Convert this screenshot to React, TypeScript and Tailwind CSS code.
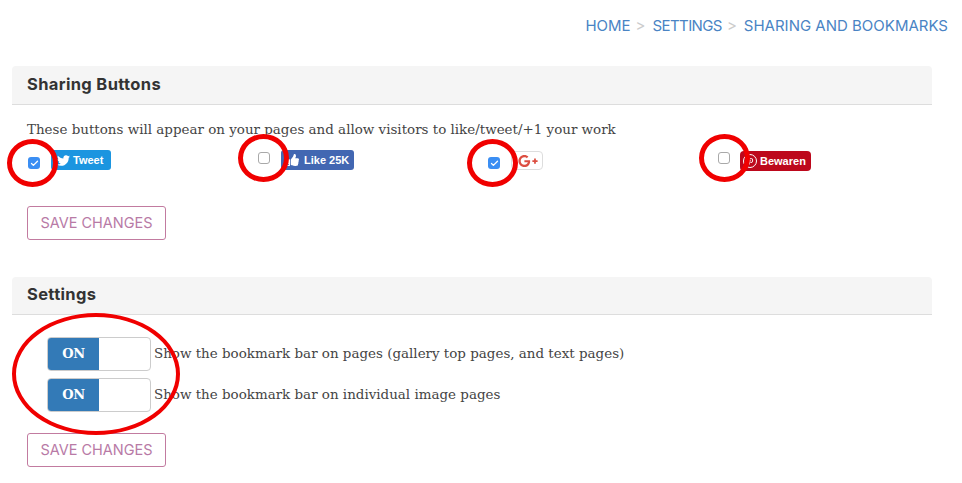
import { Check } from "lucide-react";
import { FaGooglePlusG, FaPinterestP, FaThumbsUp, FaTwitter } from "react-icons/fa";
import type { ReactNode } from "react";

const sans = "font-['Inter','Liberation_Sans',sans-serif]";
const serif = "font-['DejaVu_Serif','Liberation_Serif',serif]";

function Checkbox({ checked }: { checked: boolean }) {
  if (checked) {
    return (
      <span className="flex h-3 w-3 items-center justify-center rounded-[3px] bg-[#3b8ef3]">
        <Check size={9} strokeWidth={3.5} className="text-white" />
      </span>
    );
  }
  return <span className="block h-3 w-3 rounded-[3px] border border-[#a9a9a9] bg-white" />;
}

function PanelHeading({ height, children }: { height: string; children: ReactNode }) {
  return (
    <div className={`flex ${height} items-center rounded-t border-b border-[#ddd] bg-[#f5f5f5] px-[15px] pb-0.5 text-[16.5px] font-bold tracking-[0.35px] text-[#333] ${sans}`}>
      {children}
    </div>
  );
}

function SaveButton() {
  return (
    <button className={`flex h-[34px] w-[139px] items-center justify-center rounded-[3px] border border-[#c27ba0] bg-white text-[14.5px] text-[#b87aa6] ${sans}`}>
      SAVE CHANGES
    </button>
  );
}

function ShareOption({ checked, low, children }: { checked: boolean; low: boolean; children: ReactNode }) {
  return (
    <div className="flex items-start">
      <div className={low ? "ml-px mt-[7px] mr-[11px]" : "ml-px mt-0.5 mr-[11px]"}>
        <Checkbox checked={checked} />
      </div>
      {children}
    </div>
  );
}

function ToggleRow({ label }: { label: string }) {
  return (
    <div className="flex items-center">
      <div className="ml-5 flex h-[34px] w-[104px] overflow-hidden rounded border border-[#ccc] bg-white">
        <div className={`flex w-[51px] items-center justify-center bg-[#337ab7] text-[13px] font-bold tracking-tight text-white ${serif}`}>ON</div>
      </div>
      <span className={`ml-[3px] text-[13.45px] text-[#444] ${serif}`}>{label}</span>
    </div>
  );
}

function Ring({ className }: { className: string }) {
  return <div className={`pointer-events-none absolute rounded-[50%] border-[#f00000] ${className}`} />;
}

export default function App() {
  return (
    <div className="relative h-[483px] w-[962px] overflow-hidden bg-white">
      <div className={`flex h-[66px] items-start justify-end pr-3.5 pt-[15px] text-[15px] text-[#4a84c4] ${sans}`}>
        <span>HOME</span>
        <span className="ml-[5px] mr-[7px] text-[#ccc]">&gt;</span>
        <span className="tracking-[-0.6px]">SETTINGS</span>
        <span className="ml-[5px] mr-[7px] text-[#ccc]">&gt;</span>
        <span>SHARING AND BOOKMARKS</span>
      </div>

      <div className="mx-3 w-[920px]">
        <section>
          <PanelHeading height="h-[39px]">Sharing Buttons</PanelHeading>
          <div className="px-[15px]">
            <p className={`mt-[15px] text-[13.45px] leading-[20px] text-[#444] ${serif}`}>
              These buttons will appear on your pages and allow visitors to like/tweet/+1 your work
            </p>
            <div className="grid h-[66px] grid-cols-[230px_230px_230px_230px] pt-2.5">
              <ShareOption checked low>
                <div className="flex h-5 w-[60px] items-center rounded-[3px] bg-[#1b95e0] pl-1.5 font-['Liberation_Sans',sans-serif] text-[11px] font-bold text-white">
                  <FaTwitter size={13} className="mr-[3px]" />
                  Tweet
                </div>
              </ShareOption>
              <ShareOption checked={false} low={false}>
                <div className="flex h-5 w-[73px] items-center rounded-[3px] bg-[#4267b2] pl-1.5 font-['Liberation_Sans',sans-serif] text-[11px] font-bold text-white">
                  <FaThumbsUp size={12} className="mr-[5px]" />
                  Like 25K
                </div>
              </ShareOption>
              <ShareOption checked low>
                <div className="mt-px flex h-[19px] w-8 items-center justify-center rounded-sm border border-[#ddd] bg-white pl-0.5 text-[#dc4e41]">
                  <FaGooglePlusG size={20} />
                </div>
              </ShareOption>
              <ShareOption checked={false} low={false}>
                <div className="mt-px -ml-px flex h-5 w-[71px] items-center rounded-sm bg-[#bd081c] pl-[3px] font-['Liberation_Sans',sans-serif] text-[11px] font-bold text-white">
                  <span className="mr-[3px] flex h-3.5 w-3.5 items-center justify-center rounded-full border border-white">
                    <FaPinterestP size={7} />
                  </span>
                  Bewaren
                </div>
              </ShareOption>
            </div>
            <SaveButton />
          </div>
        </section>

        <section className="mt-[37px]">
          <PanelHeading height="h-[38px]">Settings</PanelHeading>
          <div className="px-[15px] pt-[22px]">
            <div className="flex flex-col gap-[7px]">
              <ToggleRow label="Show the bookmark bar on pages (gallery top pages, and text pages)" />
              <ToggleRow label="Show the bookmark bar on individual image pages" />
            </div>
            <div className="mt-[21px]">
              <SaveButton />
            </div>
          </div>
        </section>
      </div>

      <Ring className="left-[7px] top-[139px] h-[48px] w-[51px] border-[5px]" />
      <Ring className="left-[238px] top-[134px] h-[48px] w-[51px] border-[5px]" />
      <Ring className="left-[467px] top-[139px] h-[48px] w-[51px] border-[5px]" />
      <Ring className="left-[699px] top-[134px] h-[48px] w-[51px] border-[5px]" />
      <Ring className="left-[12px] top-[313px] h-[122px] w-[168px] border-4" />
    </div>
  );
}
